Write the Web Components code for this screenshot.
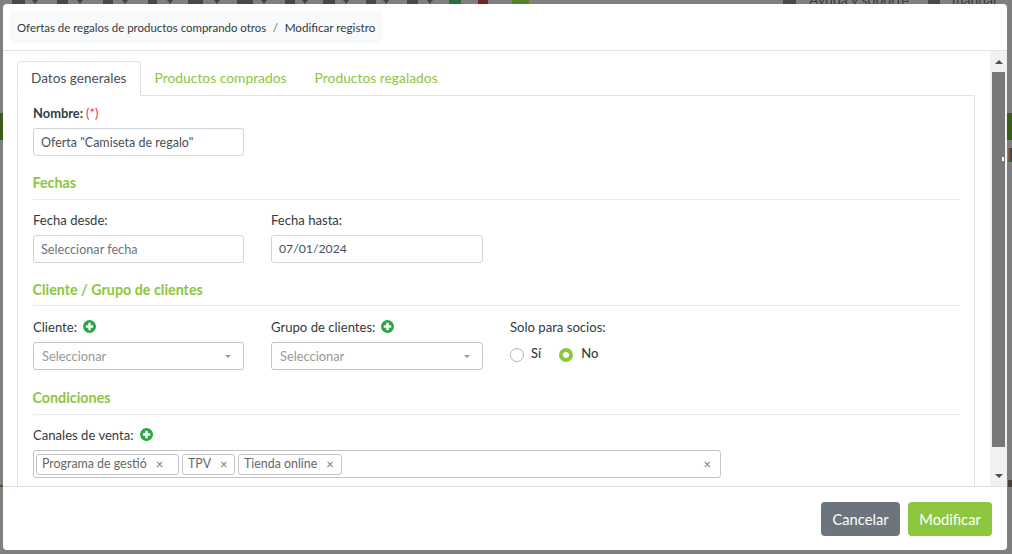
<!DOCTYPE html>
<html lang="es">
<head>
<meta charset="utf-8">
<title>Modificar registro</title>
<style>
  html, body { margin: 0; height: 100%; overflow: hidden; }
  body { font-family: Lato, "Open Sans", sans-serif; font-size: 14px; color: #343a40; }
</style>
</head>
<body>

<app-backdrop>
  <edit-modal>
    <form-tabs>
      <form-row style="margin-bottom:18px">
        <form-field label="Nombre:" required>
          <text-box size="12.5" style="--nudge:1px" value='Oferta "Camiseta de regalo"'></text-box>
        </form-field>
      </form-row>

      <form-section title="Fechas" style="margin-bottom:17px">
        <form-row>
          <form-field label="Fecha desde:"><text-box size="12.65" style="--nudge:1px" placeholder="Seleccionar fecha"></text-box></form-field>
          <form-field label="Fecha hasta:"><text-box size="12.25" value="07/01/2024"></text-box></form-field>
        </form-row>
      </form-section>

      <form-section title="Cliente / Grupo de clientes" style="margin-bottom:19px;--title-top:1px">
        <form-row style="padding-top:1px">
          <form-field label="Cliente:" add><select-box></select-box></form-field>
          <form-field label="Grupo de clientes:" add><select-box></select-box></form-field>
          <form-field label="Solo para socios:"><yes-no></yes-no></form-field>
        </form-row>
      </form-section>

      <form-section title="Condiciones">
        <form-field label="Canales de venta:" add>
          <tag-box>
            <tag-chip style="width:143px">Programa de gestió</tag-chip>
            <tag-chip style="width:53px">TPV</tag-chip>
            <tag-chip>Tienda online</tag-chip>
          </tag-box>
        </form-field>
      </form-section>
    </form-tabs>
  </edit-modal>
</app-backdrop>

<script>
// page behind the dialog, only the parts that show round its edges
class AppBackdrop extends HTMLElement {
  constructor() {
    super();
    const icons = [[12, 13], [57, 11], [103, 10], [148, 9], [188, 15], [237, 16], [285, 10], [323, 12], [366, 10], [407, 11], [783, 13], [928, 12]];
    const carets = [32, 77, 122, 167, 214, 261, 302, 343, 383, 427];
    this.attachShadow({ mode: 'open' }).innerHTML = `
      <style>
        :host { display: block; position: relative; width: 1012px; height: 554px; background: #7f7f7f; overflow: hidden; }
        .band { position: absolute; height: 27px; top: 113px; background: #3d5c1c; }
        .band.l { left: 0; width: 3px; }
        .band.r { right: 0; width: 5px; }
        .bit { position: absolute; }
        .top { position: absolute; top: 0; left: 0; right: 0; height: 4px; overflow: hidden; }
        .top i { position: absolute; top: 0; height: 4px; background: #46494b; }
        .top u { position: absolute; top: 0; width: 0; height: 0; border: 3px solid transparent; border-top: 4px solid #454545; border-bottom: 0; }
        .help { position: absolute; top: -9px; font: 14px Lato, sans-serif; color: #3a3a3a; white-space: nowrap; }
        .help.a { left: 809px; }
        .help.b { left: 952px; }
        .dlg { position: absolute; left: 3px; top: 4px; }
      </style>
      <div class="band l"></div><div class="band r"></div>
      <div class="bit" style="left:1008px;top:148px;width:2px;height:14px;background:#8a5a20"></div>
      <div class="bit" style="left:1010px;top:148px;width:2px;height:14px;background:#2d4a70"></div>
      <div class="bit" style="left:1008px;top:480px;width:4px;height:7px;background:#4a4238"></div>
      <div class="bit" style="left:0;top:485px;width:3px;height:2px;background:#6b4a20"></div>
      <div class="top">
        ${icons.map(([x, w]) => `<i style="left:${x}px;width:${w}px"></i>`).join('')}
        ${carets.map(x => `<u style="left:${x}px"></u>`).join('')}
        <i style="left:449px;width:12px;background:#2e6b44"></i>
        <i style="left:478px;width:10px;background:#6e2626"></i>
        <i style="left:512px;width:17px;background:#55802c"></i>
        <span class="help a">Ayuda y soporte</span>
        <span class="help b">manual</span>
      </div>
      <div class="dlg"><slot></slot></div>`;
  }
}

class EditModal extends HTMLElement {
  constructor() {
    super();
    this.attachShadow({ mode: 'open' }).innerHTML = `
      <style>
        :host { display: flex; flex-direction: column; width: 1004px; height: 546px; background: #fff; border-radius: 4px; overflow: hidden; position: relative; }
        header { flex: none; box-sizing: border-box; height: 47px; border-bottom: 1px solid #dee2e6; padding: 7px 0 0 7px; }
        .crumb { display: inline-flex; align-items: center; height: 32px; padding: 0 7px; background: #f8f9fa; border-radius: 4px; color: #343a40; }
        .crumb b { font-weight: 400; font-size: 11.45px; }
        .crumb b + span { margin: 0 6.5px; color: #6c757d; font-size: 12px; }
        .crumb span + b { font-size: 11.7px; }
        main { flex: 1; display: flex; min-height: 0; }
        .content { flex: 1; min-width: 0; overflow: hidden; padding: 10px 0 0 14px; }
        footer { flex: none; box-sizing: border-box; height: 64px; border-top: 1px solid #dee2e6; display: flex; justify-content: flex-end; align-items: flex-start; gap: 8px; padding: 15px 15px 0 0; }
        button { height: 34px; border: 0; border-radius: 4px; padding: 0; color: #fff; font: 14.7px Lato, sans-serif; }
        .cancel { background: #6c757d; width: 79px; }
        .ok { background: #8dc63f; width: 84px; }
        .bar { flex: none; width: 17px; background: #f1f1f1; display: flex; flex-direction: column; align-items: center; }
        .arrow { flex: none; height: 21px; display: flex; align-items: center; justify-content: center; }
        .thumb { flex: none; width: 13px; height: 375px; background: #787878; position: relative; }
        .thumb i { position: absolute; right: 1px; top: 85px; width: 2px; height: 4px; background: #fff; }
        .gap { flex: 1; }
      </style>
      <header><div class="crumb"><b>Ofertas de regalos de productos comprando otros</b><span>/</span><b>Modificar registro</b></div></header>
      <main>
        <div class="content"><slot></slot></div>
        <div class="bar">
          <div class="arrow"><svg width="8" height="4" viewBox="0 0 8 4"><path d="M4 0l4 4H0z" fill="#505050"/></svg></div>
          <div class="thumb"><i></i></div>
          <div class="gap"></div>
          <div class="arrow"><svg width="8" height="4" viewBox="0 0 8 4"><path d="M0 0h8L4 4z" fill="#505050"/></svg></div>
        </div>
      </main>
      <footer><button class="cancel">Cancelar</button><button class="ok">Modificar</button></footer>`;
  }
}

class FormTabs extends HTMLElement {
  constructor() {
    super();
    this.attachShadow({ mode: 'open' }).innerHTML = `
      <style>
        :host { display: block; width: 958px; }
        nav { display: flex; height: 35px; margin-bottom: -1px; position: relative; font-size: 13.85px; }
        a { padding: 0 13px; line-height: 32px; color: #8dc63f; border: 1px solid transparent; }
        a.on { font-size: 13.6px; color: #495057; background: #fff; border-color: #dee2e6 #dee2e6 #fff; border-radius: 4px 4px 0 0; }
        .pane { box-sizing: border-box; border: 1px solid #dee2e6; padding: 8px 14px 0 15px; height: 500px; }
      </style>
      <nav><a class="on">Datos generales</a><a>Productos comprados</a><a>Productos regalados</a></nav>
      <div class="pane"><slot></slot></div>`;
  }
}

class FormSection extends HTMLElement {
  constructor() {
    super();
    this.attachShadow({ mode: 'open' }).innerHTML = `
      <style>
        :host { display: block; }
        h5 { margin: 0 0 11px; padding-top: var(--title-top, 0); height: calc(25px - var(--title-top, 0px)); font-size: 14.3px; line-height: 17px; text-indent: -0.5px; font-weight: 700; color: #8dc63f; border-bottom: 1px solid #e9ecef; }
      </style>
      <h5>${this.getAttribute('title')}</h5><slot></slot>`;
    this.removeAttribute('title');
  }
}

class FormRow extends HTMLElement {
  constructor() {
    super();
    this.attachShadow({ mode: 'open' }).innerHTML = `
      <style>:host { display: grid; grid-template-columns: 211px 212px 211px; column-gap: 27px; }</style><slot></slot>`;
  }
}

class FormField extends HTMLElement {
  constructor() {
    super();
    const req = this.hasAttribute('required') ? '<em>(*)</em>' : '';
    const add = this.hasAttribute('add')
      ? '<svg width="13" height="13" viewBox="0 0 13 13"><circle cx="6.5" cy="6.5" r="6.5" fill="#28a745"/><path d="M6.5 2.8v7.4M2.8 6.5h7.4" stroke="#fff" stroke-width="2.4"/></svg>' : '';
    this.attachShadow({ mode: 'open' }).innerHTML = `
      <style>
        :host { display: block; }
        label { display: flex; align-items: center; gap: 3px; height: 17px; margin-bottom: 7px; font-size: 13.1px; color: #343a40; white-space: nowrap; }
        :host([required]) label { font-size: 12.9px; font-weight: 700; }
        em { font-style: normal; font-weight: 400; color: #ff2b3a; }
        svg { margin-left: 3px; }
      </style>
      <label>${this.getAttribute('label')}${req}${add}</label><slot></slot>`;
  }
}

class TextBox extends HTMLElement {
  constructor() {
    super();
    const value = this.getAttribute('value');
    this.attachShadow({ mode: 'open' }).innerHTML = `
      <style>
        :host { display: block; }
        div { box-sizing: border-box; height: 28px; border: 1px solid #ced4da; border-radius: 3px; padding: var(--nudge, 0) 7px 0; line-height: 26px; font-size: ${this.getAttribute('size')}px; color: ${value ? '#495057' : '#6c757d'}; white-space: nowrap; overflow: hidden; }
      </style>
      <div>${(value || this.getAttribute('placeholder')).replace(/"/g, '&quot;')}</div>`;
  }
}

class SelectBox extends HTMLElement {
  constructor() {
    super();
    this.attachShadow({ mode: 'open' }).innerHTML = `
      <style>
        :host { display: block; }
        div { box-sizing: border-box; height: 28px; border: 1px solid #c4c4c4; border-radius: 3px; padding: 0 12px 0 8px; display: flex; align-items: center; justify-content: space-between; font-size: 12.85px; color: #999; }
        i { width: 0; height: 0; border: 3px solid transparent; border-top: 3px solid #999; border-bottom: 0; }
      </style>
      <div>Seleccionar<i></i></div>`;
  }
}

class YesNo extends HTMLElement {
  constructor() {
    super();
    this.attachShadow({ mode: 'open' }).innerHTML = `
      <style>
        :host { display: flex; align-items: center; height: 26px; font-size: 13px; color: #343a40; font-weight: 500; }
        b { box-sizing: border-box; width: 14px; height: 14px; border-radius: 50%; border: 1px solid #adb5bd; background: #fff; margin-right: 7px; }
        b.on { border: 4px solid #8dc63f; margin-right: 8px; }
        span { margin: 0 18px 4px 0; }
      </style>
      <b></b><span>Sí</span><b class="on"></b><span>No</span>`;
  }
}

class TagBox extends HTMLElement {
  constructor() {
    super();
    this.attachShadow({ mode: 'open' }).innerHTML = `
      <style>
        :host { display: flex; align-items: center; gap: 3px; box-sizing: border-box; width: 688px; height: 28px; border: 1px solid #c4c4c4; border-radius: 3px; padding: 0 9px 0 2px; }
        i { margin-left: auto; font: normal 13px Lato, sans-serif; color: #777; }
      </style>
      <slot></slot><i>×</i>`;
  }
}

class TagChip extends HTMLElement {
  constructor() {
    super();
    this.attachShadow({ mode: 'open' }).innerHTML = `
      <style>
        :host { display: flex; align-items: center; box-sizing: border-box; height: 21px; border: 1px solid #c4c4c4; border-radius: 3px; padding: 0 7px 1px 5px; font-size: 12.4px; color: #666; white-space: nowrap; }
        i { font: normal 13px Lato, sans-serif; color: #777; margin-left: 9px; }
      </style>
      <slot></slot><i>×</i>`;
  }
}

customElements.define('app-backdrop', AppBackdrop);
customElements.define('edit-modal', EditModal);
customElements.define('form-tabs', FormTabs);
customElements.define('form-section', FormSection);
customElements.define('form-row', FormRow);
customElements.define('form-field', FormField);
customElements.define('text-box', TextBox);
customElements.define('select-box', SelectBox);
customElements.define('yes-no', YesNo);
customElements.define('tag-box', TagBox);
customElements.define('tag-chip', TagChip);
</script>
</body>
</html>
